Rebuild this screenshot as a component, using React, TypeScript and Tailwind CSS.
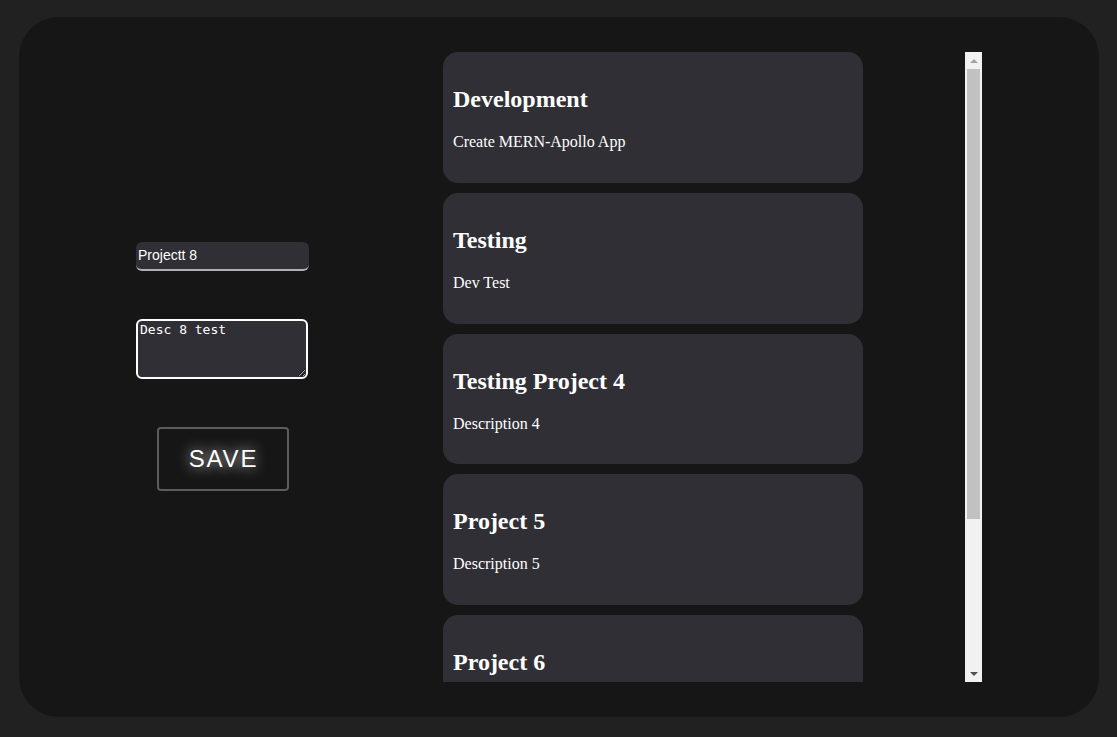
import { useState } from "react";

const projects = [
  { id: 1, name: "Development", description: "Create MERN-Apollo App" },
  { id: 2, name: "Testing", description: "Dev Test" },
  { id: 3, name: "Testing Project 4", description: "Description 4" },
  { id: 4, name: "Project 5", description: "Description 5" },
  { id: 5, name: "Project 6", description: "Description 6" },
];

const App = () => {
  const [name, setName] = useState("Projectt 8");
  const [description, setDescription] = useState("Desc 8 test");

  return (
    <div className="min-h-[737px] w-full bg-[#212121] pt-[17px] pl-[19px]">
      <div className="flex h-[700px] w-[1080px] rounded-[40px] bg-[#161616]">
        {/* Form */}
        <div className="flex w-[424px] flex-col justify-center pb-[2px] pl-[117px]">
          <div className="flex w-[173px] flex-col items-center gap-[48px]">
            <input
              type="text"
              value={name}
              onChange={(e) => setName(e.target.value)}
              className="h-[29px] w-[173px] rounded-[6px] border-b-2 border-[#b3b0b3] bg-[#302f36] px-[2px] text-[14px] text-white outline-none"
              style={{ fontFamily: "'Liberation Sans', Arial, sans-serif" }}
            />
            <textarea
              value={description}
              onChange={(e) => setDescription(e.target.value)}
              className="h-[60px] w-[172px] self-start rounded-[6px] border-2 border-white bg-[#302f36] px-[2px] py-[1px] text-[13px] leading-[16px] text-white outline-none"
              style={{ fontFamily: "'DejaVu Sans Mono', monospace" }}
            />
            <button
              className="h-[64px] w-[132px] rounded-[4px] border-2 border-[#5c5c5c] bg-[#161616] pl-[2px] text-[24px] tracking-[1.8px] text-white [text-shadow:0_0_14px_rgba(255,255,255,0.9)]"
              style={{ fontFamily: "'Liberation Sans', Arial, sans-serif" }}
            >
              SAVE
            </button>
          </div>
        </div>

        {/* Project list */}
        <div className="flex h-[630px] mt-[35px]">
          <div className="flex w-[522px] flex-col gap-[10px] overflow-hidden">
            {projects.map((project) => (
              <div
                key={project.id}
                className="h-[130.75px] w-[420px] shrink-0 rounded-[15px] bg-[#302f36] px-[10px] pt-[33px] text-white"
                style={{ fontFamily: "'Liberation Serif', 'Times New Roman', serif" }}
              >
                <h2 className="text-[24px] font-bold leading-[28px]">{project.name}</h2>
                <p className="mt-[20px] text-[16px] leading-[18px]">{project.description}</p>
              </div>
            ))}
          </div>

          {/* Scrollbar */}
          <div className="flex h-[630px] w-[17px] flex-col bg-[#f1f1f1]">
            <div className="flex h-[17px] items-center justify-center">
              <div className="h-0 w-0 border-x-[4px] border-b-[4px] border-x-transparent border-b-[#a3a3a3]" />
            </div>
            <div className="mx-[2px] h-[450px] bg-[#c1c1c1]" />
            <div className="flex-1" />
            <div className="flex h-[17px] items-center justify-center">
              <div className="h-0 w-0 border-x-[4px] border-t-[4px] border-x-transparent border-t-[#505050]" />
            </div>
          </div>
        </div>
      </div>
    </div>
  );
};

export default App;
